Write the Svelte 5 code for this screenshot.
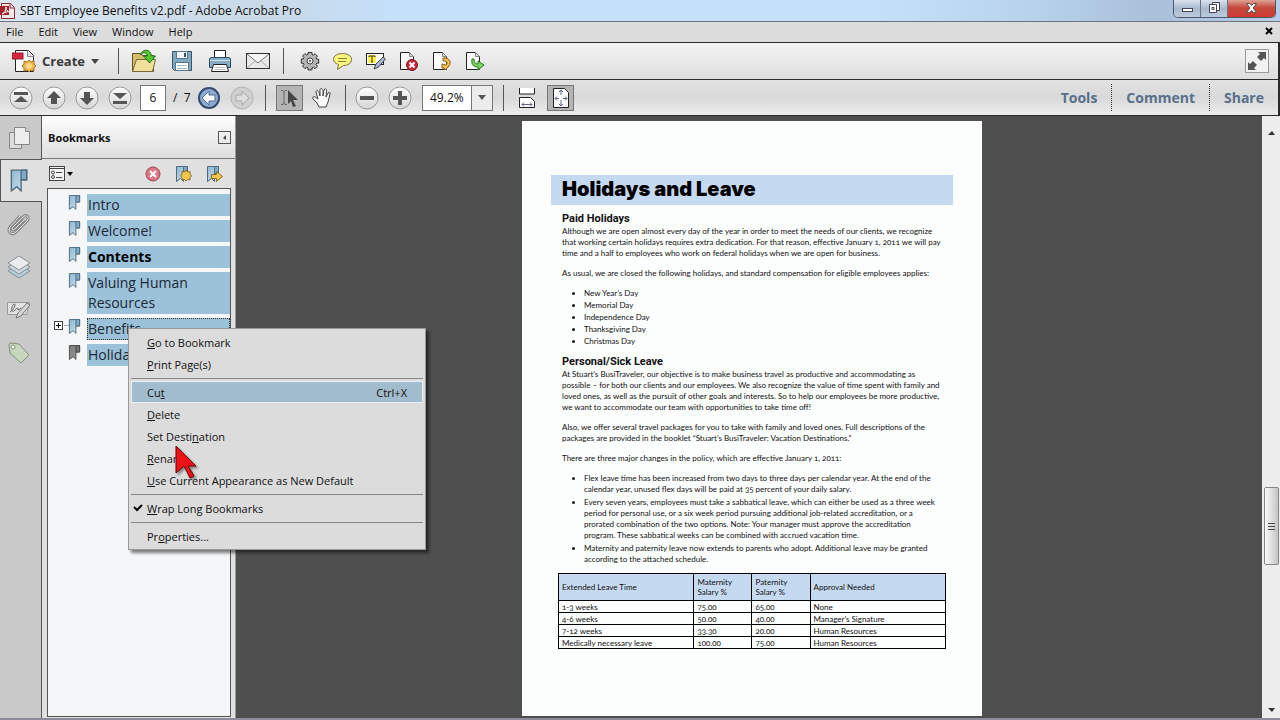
<script lang="ts">
  const menus = ['File', 'Edit', 'View', 'Window', 'Help'];

  const bookmarks = [
    { title: 'Intro' },
    { title: 'Welcome!' },
    { title: 'Contents', bold: true },
    { title: 'Valuing Human Resources' },
    { title: 'Benefits', expandable: true, focused: true },
    { title: 'Holidays', visited: true },
  ];

  // `key` is the index of the underlined access key
  const menuGroups = [
    [
      { label: 'Go to Bookmark', key: 0 },
      { label: 'Print Page(s)', key: 0 },
    ],
    [
      { label: 'Cut', key: 2, shortcut: 'Ctrl+X', active: true },
      { label: 'Delete', key: 0 },
      { label: 'Set Destination', key: 9 },
      { label: 'Rename', key: 0 },
      { label: 'Use Current Appearance as New Default', key: 0 },
    ],
    [{ label: 'Wrap Long Bookmarks', key: 0, checked: true }],
    [{ label: 'Properties...', key: 2 }],
  ];

  const holidays = [
    'New Year’s Day',
    'Memorial Day',
    'Independence Day',
    'Thanksgiving Day',
    'Christmas Day',
  ];

  const leaveRows = [
    ['1-3 weeks', '75.00', '65.00', 'None'],
    ['4-6 weeks', '50.00', '40.00', 'Manager’s Signature'],
    ['7-12 weeks', '33.30', '20.00', 'Human Resources'],
    ['Medically necessary leave', '100.00', '75.00', 'Human Resources'],
  ];

  let pageNumber = $state('6');
  let zoomLevel = $state('49.2%');
</script>

{#snippet ribbon()}
  <path d="M1.5 1.5h11v7h-4v8l-3-3-4 3z" fill="url(#ribbonFill)" stroke="#4d6b80" />
  <path d="M8.5 8.5v-6q0-1 1-1h3v7z" fill="#7fa9c4" stroke="#4d6b80" />
{/snippet}

{#snippet pageSheet()}
  <path d="M2.5 1.5h9l4 4v13h-13z" fill="#fafafa" stroke="#222" />
  <path d="M11.5 1.5v4h4" fill="#ddd" stroke="#888" />
{/snippet}

<svg class="defs" aria-hidden="true">
  <defs>
    <linearGradient id="ribbonFill" x1="0" x2="1" y2="1">
      <stop offset="0" stop-color="#8db6d0" />
      <stop offset="1" stop-color="#d3e6f1" />
    </linearGradient>
    <linearGradient id="roundFill" x2="0" y2="1">
      <stop offset="0" stop-color="#fff" />
      <stop offset="1" stop-color="#d4d4d4" />
    </linearGradient>
  </defs>
</svg>

<div class="app">
  <header class="titlebar">
    <svg class="app-icon" width="16" height="18" viewBox="0 0 16 18">
      <path d="M1.5 1.5h9l4 4v11h-13z" fill="#f4e4e4" stroke="#8c2f35" />
      <path d="M0 4h9v9H0z" fill="#a3222b" />
      <path d="M2 12c3-1 4-4 4-7 0 4 2 5 6 5-4-1-7 0-10 2" fill="none" stroke="#fff" />
      <path d="M10 2v4h4" fill="none" stroke="#8c2f35" />
    </svg>
    <span class="title">SBT Employee Benefits v2.pdf - Adobe Acrobat Pro</span>
    <div class="window-buttons">
      <button aria-label="Minimize">
        <svg width="13" height="16"><rect x="1.5" y="8.5" width="10" height="3" fill="#fff" stroke="#445" /></svg>
      </button>
      <button aria-label="Restore">
        <svg width="13" height="16" fill="#fff" stroke="#445">
          <path d="M4.500 2.500h7v8h-7z" /><path d="M1.500 4.500h7v8h-7z" /><path d="M4 7.500h2v2h-2z" />
        </svg>
      </button>
      <button class="close" aria-label="Close">
        <svg width="13" height="16"><path d="M1.500 3.500h3l2 2 2-2h3l-3.500 4.500 3.500 4.500h-3l-2-2-2 2h-3l3.500-4.500z" fill="#fff" stroke="#555" /></svg>
      </button>
    </div>
  </header>

  <nav class="menubar">
    {#each menus as menu}
      <button>{menu}</button>
    {/each}
    <button class="close-doc" aria-label="Close document">
      <svg width="8" height="8"><path d="M1 1l6 6M7 1l-6 6" stroke="#000" stroke-width="2" /></svg>
    </button>
  </nav>

  <div class="toolbar">
    <button class="create">
      <svg width="24" height="24" viewBox="0 0 24 24">
        <path d="M3.500 1.500h13l5 5v16h-18z" fill="#fafafa" stroke="#222" />
        <path d="M15.500 1.500v6h6" fill="#e4e4e4" stroke="#888" />
        <rect x="0" y="4" width="11" height="6" fill="#d8243c" stroke="#8d1f2b" />
        <path d="M17 11l2 2 3-1v3l2 2-2 2v3l-3-1-2 2-2-2-3 1v-3l-2-2 2-2v-3l3 1z" fill="#efb74f" stroke="#a87722" />
        <circle cx="17" cy="17" r="3" fill="#ffd98a" />
      </svg>
      <span>Create</span>
      <svg width="8" height="5"><path d="M0 0h8l-4 5z" fill="#444" /></svg>
    </button>
    <span class="sep"></span>
    <div class="wide-tools">
      <button aria-label="Open">
        <svg width="26" height="26" viewBox="0 0 26 26">
          <path d="M1.500 5.500h8l2 2h11v16h-21z" fill="#d3bd68" stroke="#5e5428" />
          <path d="M1.500 23.500l4-12h19l-3 12z" fill="#f0e09a" stroke="#75683a" />
          <path d="M9.500 7c1-6 10-7 11 1h4l-6 7-6-7h4c-1-4-5-4-7-1z" fill="#55c630" stroke="#22701b" />
        </svg>
      </button>
      <button aria-label="Save">
        <svg width="22" height="22" viewBox="0 0 22 22">
          <path d="M1.500 1.500h19v19h-17l-2-2z" fill="#7fa9c3" stroke="#38536a" />
          <path d="M5.500 1.500h11v7h-11z" fill="#f1f5f8" stroke="#54758d" />
          <path d="M13 3h2v4h-2z" fill="#38536a" />
          <path d="M4.500 12.500h13v8h-13z" fill="#fff" stroke="#54758d" />
          <path d="M6 15.500h10M6 18.500h10" stroke="#a9b6c0" />
        </svg>
      </button>
      <button aria-label="Print">
        <svg width="24" height="24" viewBox="0 0 24 24">
          <path d="M6.500 1.500h11v9h-11z" fill="#fff" stroke="#222" />
          <path d="M1.500 10.500q0-2 2-2h17q2 0 2 2v8h-21z" fill="#86acc6" stroke="#2f4d63" />
          <path d="M2 11.500h20" stroke="#cfe1ec" />
          <path d="M5.500 15.500h13l2 7h-17z" fill="#fff" stroke="#222" />
          <path d="M7 18.500h10M7 20.500h10" stroke="#bbb" />
        </svg>
      </button>
      <button aria-label="Email">
        <svg width="26" height="18" viewBox="0 0 26 18">
          <rect x="1.500" y="1.500" width="23" height="15" fill="#e9e9e9" stroke="#333" />
          <path d="M2 16l8-7M24 16l-8-7" stroke="#aaa" />
          <path d="M2 2l11 9 11-9" fill="#f6f6f6" stroke="#777" />
        </svg>
      </button>
    </div>
    <span class="sep"></span>
    <div class="tools first">
      <button aria-label="Preferences">
        <svg width="20" height="20" viewBox="0 0 20 20">
          <path d="M8 1.500h4v2l1.500.6 1.500-1.400 2.500 2.500-1.400 1.500.6 1.500h2v4h-2l-.6 1.500 1.400 1.500-2.500 2.500-1.500-1.400-1.500.6v2H8v-2l-1.500-.6-1.500 1.400-2.500-2.500 1.400-1.500-.6-1.500h-2V8h2l.6-1.500-1.400-1.500L5 2.500l1.500 1.400L8 3.300z" fill="#b5b5b5" stroke="#333" />
          <circle cx="10" cy="10" r="3" fill="#eee" stroke="#444" />
          <circle cx="10" cy="10" r="1" fill="#555" />
        </svg>
      </button>
      <button aria-label="Add sticky note">
        <svg width="21" height="18" viewBox="0 0 21 18">
          <path d="M10.500 1.500c5 0 9 2 9 6s-4 6-8 6l-6 4 1-5c-3-1-5-3-5-5 0-4 4-6 9-6z" fill="#fbf580" stroke="#777440" />
          <path d="M6 6.500h9M6 9.500h8" stroke="#888332" />
        </svg>
      </button>
      <button aria-label="Highlight text">
        <svg width="20" height="18" viewBox="0 0 20 18">
          <rect x=".5" y="1.500" width="17" height="11" fill="#fff" stroke="#222" />
          <path d="M2 3h8v8H2z" fill="#fff04a" />
          <path d="M3 5V4h6v1M6 4v6M5 10h2" fill="none" stroke="#333" />
          <path d="M8 17l2-5 7-7 2.500 2-7 8z" fill="#aab6d4" stroke="#444" />
        </svg>
      </button>
      <button aria-label="Delete pages">
        <svg width="21" height="21" viewBox="0 0 21 21">
          {@render pageSheet()}
          <circle cx="14" cy="14" r="5.500" fill="#c4283a" stroke="#7e1622" />
          <path d="M11.500 11.500l5 5M16.500 11.500l-5 5" stroke="#fff" stroke-width="2" />
        </svg>
      </button>
      <button aria-label="Rotate pages">
        <svg width="21" height="21" viewBox="0 0 21 21">
          {@render pageSheet()}
          <path d="M12 7c6-1 9 4 6 8l-4 4-1-2h-2v-4l4 1c2-2 1-4-3-4z" fill="#f0bb58" stroke="#8c631b" />
        </svg>
      </button>
      <button aria-label="Extract pages">
        <svg width="21" height="21" viewBox="0 0 21 21">
          {@render pageSheet()}
          <path d="M8 8c-1 6 2 8 6 8v3l6-5-6-4v3c-3 0-4-2-4-5z" fill="#7bd45f" stroke="#2a7a1e" />
        </svg>
      </button>
    </div>
    <button class="fullscreen" aria-label="Read mode">
      <svg width="20" height="20" viewBox="0 0 20 20" fill="#555">
        <path d="M19 1v8l-2-2-3 3-4-4 3-3-2-2z" /><path d="M1 19v-8l2 2 3-3 4 4-3 3 2 2z" />
      </svg>
    </button>
  </div>

  <div class="toolbar second">
    <div class="tools">
      <button aria-label="First page">
        <svg width="24" height="24" viewBox="0 0 24 24">
          <circle cx="12" cy="12" r="11" fill="url(#roundFill)" stroke="#999" />
          <path d="M5 6h14v3H5zM12 10l7 6H5z" fill="#555" />
        </svg>
      </button>
      <button aria-label="Previous page">
        <svg width="24" height="24" viewBox="0 0 24 24">
          <circle cx="12" cy="12" r="11" fill="url(#roundFill)" stroke="#999" />
          <path d="M12 5l7 7h-4v6H9v-6H5z" fill="#555" />
        </svg>
      </button>
      <button aria-label="Next page">
        <svg width="24" height="24" viewBox="0 0 24 24">
          <circle cx="12" cy="12" r="11" fill="url(#roundFill)" stroke="#999" />
          <path d="M12 19l7-7h-4V6H9v6H5z" fill="#555" />
        </svg>
      </button>
      <button aria-label="Last page">
        <svg width="24" height="24" viewBox="0 0 24 24">
          <circle cx="12" cy="12" r="11" fill="url(#roundFill)" stroke="#999" />
          <path d="M5 15h14v3H5zM12 13l7-6H5z" fill="#555" />
        </svg>
      </button>
    </div>
    <input class="page-input" aria-label="Page number" bind:value={pageNumber} />
    <span class="page-total">/&nbsp; 7</span>
    <div class="tools views">
      <button aria-label="Previous view">
        <svg width="24" height="24" viewBox="0 0 24 24">
          <circle cx="12" cy="12" r="10" fill="#8facd3" stroke="#344a70" stroke-width="2" />
          <path d="M5 12l7-7v4h6v6h-6v4z" fill="#fff" stroke="#4d6893" />
        </svg>
      </button>
      <button aria-label="Next view" disabled>
        <svg width="24" height="24" viewBox="0 0 24 24">
          <circle cx="12" cy="12" r="11" fill="#d0d0d0" stroke="#b4b4b4" />
          <path d="M19 12l-7-7v4H6v6h6v4z" fill="#dedede" stroke="#aaa" />
        </svg>
      </button>
    </div>
    <span class="sep"></span>
    <button class="pressed" aria-label="Selection tool">
      <svg width="20" height="20" viewBox="0 0 20 20">
        <path d="M1 2.500h2l1 1 1-1h2M1 16.500h2l1-1 1 1h2M4 3v13" fill="none" stroke="#666" />
        <path d="M8 2l10 10h-5l3 6-3 1-2-6-3 3z" fill="#444" />
      </svg>
    </button>
    <button class="hand" aria-label="Hand tool">
      <svg width="22" height="22" viewBox="0 0 22 22">
        <path d="M8 20l-2-4-4-4c-1-2 1-3 2-2l3 2-2-7c0-2 2-2 3 0l1 4V3c0-2 2-2 3 0v6l1-6c1-2 3-1 2.500 1l-.5 6 2-4c1-1 3-1 2 1l-2 8-2 5z" fill="#fafafa" stroke="#444" />
      </svg>
    </button>
    <span class="sep"></span>
    <div class="tools">
      <button aria-label="Zoom out">
        <svg width="24" height="24" viewBox="0 0 24 24">
          <circle cx="12" cy="12" r="11" fill="url(#roundFill)" stroke="#999" />
          <path d="M5 10h14v4H5z" fill="#555" />
        </svg>
      </button>
      <button aria-label="Zoom in">
        <svg width="24" height="24" viewBox="0 0 24 24">
          <circle cx="12" cy="12" r="11" fill="url(#roundFill)" stroke="#999" />
          <path d="M10 5h4v5h5v4h-5v5h-4v-5H5v-4h5z" fill="#555" />
        </svg>
      </button>
    </div>
    <div class="zoom">
      <select aria-label="Zoom level" bind:value={zoomLevel}>
        <option>49.2%</option>
        <option>100%</option>
      </select>
      <span class="zoom-arrow"><svg width="8" height="5"><path d="M0 0h8l-4 5z" fill="#555" /></svg></span>
    </div>
    <span class="sep"></span>
    <button class="fit" aria-label="Fit width">
      <svg width="18" height="22" viewBox="0 0 18 22" fill="#fff" stroke="#222">
        <path d="M1.500 1v6h15v-6" /><path d="M1.500 20.500v-10h11l4 4v6z" />
        <path d="M4 17.500h10M6 15.500l-2 2 2 2M12 15.500l2 2-2 2" fill="none" stroke="#667" />
      </svg>
    </button>
    <button class="pressed" aria-label="Fit page">
      <svg width="20" height="22" viewBox="0 0 20 22">
        <path d="M2.500 1.500h11l4 4v15h-15z" fill="#fff" stroke="#222" />
        <path d="M10 3v5M10 13v6M4 11.500h4M12 11.500h4M8 5l2-2 2 2M8 17l2 2 2-2M6 9.500l-2 2 2 2M14 9.500l2 2-2 2" fill="none" stroke="#5c6684" />
      </svg>
    </button>
    <div class="task-panes">
      <button>Tools</button>
      <button>Comment</button>
      <button>Share</button>
    </div>
  </div>

  <main class="workspace">
    <nav class="rail">
      <button aria-label="Page thumbnails">
        <svg width="22" height="24" viewBox="0 0 22 24" fill="#dcdcdc" stroke="#888">
          <path d="M1.500 6.500h12v16h-12z" /><path d="M6.500 1.500h11l4 4v13h-15z" fill="#eee" /><path d="M17.500 1.500v4h4" />
        </svg>
      </button>
      <button class="selected" aria-label="Bookmarks">
        <svg width="20" height="25" viewBox="0 0 14 18">{@render ribbon()}</svg>
      </button>
      <button aria-label="Attachments">
        <svg width="24" height="24" viewBox="0 0 24 24" fill="none" stroke="#888">
          <path d="M17 8l-9 9c-2 2-4 0-2-2L16 5c3-3 7 0 4 4L9 20c-4 4-9 0-6-5l10-11" stroke-width="3" />
          <path d="M17 8l-9 9c-2 2-4 0-2-2L16 5c3-3 7 0 4 4L9 20c-4 4-9 0-6-5l10-11" stroke="#e4e4e4" />
        </svg>
      </button>
      <button aria-label="Layers">
        <svg width="24" height="24" viewBox="0 0 24 24" stroke="#8a9095">
          <path d="M1 16l11-7 11 7-11 7z" fill="#b4cbd8" /><path d="M1 12l11-7 11 7-11 7z" fill="#ccd8df" /><path d="M1 8l11-7 11 7-11 7z" fill="#e9ebec" />
        </svg>
      </button>
      <button aria-label="Signatures">
        <svg width="24" height="20" viewBox="0 0 24 20">
          <path d="M.5 2.500h22l-3 12H.5z" fill="#e2e2e2" stroke="#999" />
          <path d="M3 12c5-3 6-9 4-8-3 2-3 9 0 7 3-3 4-4 4-1l3-2" fill="none" stroke="#666" />
          <path d="M9 18l2-5 9-10 3 2-9 11z" fill="#d5d5d5" stroke="#777" />
        </svg>
      </button>
      <button aria-label="Tags">
        <svg width="24" height="24" viewBox="0 0 24 24">
          <path d="M2 4q0-2 2-2l8 1 10 11-8 8L3 12z" fill="#c6d7bd" stroke="#85907f" />
          <circle cx="6" cy="6" r="2" fill="#f3f3f3" stroke="#85907f" />
        </svg>
      </button>
    </nav>

    <aside class="panel">
      <div class="panel-head">
        <h2>Bookmarks</h2>
        <button aria-label="Collapse panel">
          <svg width="3" height="5"><path d="M3 0v5l-3-2z" fill="#444" /></svg>
        </button>
      </div>
      <div class="panel-tools">
        <button class="options" aria-label="Options">
          <svg width="25" height="15" viewBox="0 0 25 15">
            <rect x=".5" y=".5" width="15" height="14" fill="#f3f3f3" stroke="#444" />
            <path d="M1 2.500h14M7 6.500h6M7 11.500h6" stroke="#444" />
            <circle cx="4" cy="6.500" r="1.500" fill="none" stroke="#444" /><circle cx="4" cy="11" r="1.500" fill="none" stroke="#444" />
            <path d="M18 6h6l-3 4z" fill="#000" />
          </svg>
        </button>
        <button aria-label="Delete bookmark">
          <svg width="16" height="16" viewBox="0 0 16 16">
            <circle cx="8" cy="8" r="7" fill="#dd7584" stroke="#9b4554" />
            <path d="M5 5l6 6M11 5l-6 6" stroke="#fff" stroke-width="2" />
          </svg>
        </button>
        <button aria-label="New bookmark">
          <svg width="17" height="18" viewBox="0 0 17 18">
            {@render ribbon()}
            <path d="M11 5l1.500 2 2.500-.5v2.500l1.500 2-1.500 1.500v2.500l-2.500-.5-1.500 1.500-1.500-1.500-2.500.5v-2.500L5.500 11 7 9V6.500l2.500.5z" fill="#f3c750" stroke="#8f6d1f" />
          </svg>
        </button>
        <button aria-label="Expand current bookmark">
          <svg width="17" height="18" viewBox="0 0 17 18">
            {@render ribbon()}
            <path d="M5.500 9.500h5v-3l6 5-6 5v-3h-5z" fill="#f3c750" stroke="#8f6d1f" />
          </svg>
        </button>
      </div>
      <ul class="tree">
        {#each bookmarks as item}
          <li>
            <span class="toggle">
              {#if item.expandable}
                <svg width="18" height="9" viewBox="0 0 18 9" fill="none">
                  <rect x=".5" y=".5" width="8" height="8" fill="#fff" stroke="#444" />
                  <path d="M2 4.500h5M4.500 2v5" stroke="#000" /><path d="M10 4.500h8" stroke="#aaa" />
                </svg>
              {/if}
            </span>
            <svg class="mark" class:visited={item.visited} width="13" height="17" viewBox="0 0 14 18">{@render ribbon()}</svg>
            <button class:bold={item.bold} class:focused={item.focused}>{item.title}</button>
          </li>
        {/each}
      </ul>
    </aside>

    <section class="viewer">
      <article class="page">
        <h1>Holidays and Leave</h1>
        <div class="body">
          <h3>Paid Holidays</h3>
          <p>
            Although we are open almost every day of the year in order to meet the needs of our clients, we recognize<br />
            that working certain holidays requires extra dedication. For that reason, effective January 1, 2011 we will pay<br />
            time and a half to employees who work on federal holidays when we are open for business.
          </p>
          <p>As usual, we are closed the following holidays, and standard compensation for eligible employees applies:</p>
          <ul class="short">
            {#each holidays as day}
              <li>{day}</li>
            {/each}
          </ul>
          <h3>Personal/Sick Leave</h3>
          <p>
            At Stuart’s BusiTraveler, our objective is to make business travel as productive and accommodating as<br />
            possible – for both our clients and our employees. We also recognize the value of time spent with family and<br />
            loved ones, as well as the pursuit of other goals and interests. So to help our employees be more productive,<br />
            we want to accommodate our team with opportunities to take time off!
          </p>
          <p>
            Also, we offer several travel packages for you to take with family and loved ones. Full descriptions of the<br />
            packages are provided in the booklet “Stuart’s BusiTraveler: Vacation Destinations.”
          </p>
          <p>There are three major changes in the policy, which are effective January 1, 2011:</p>
          <ul>
            <li>
              Flex leave time has been increased from two days to three days per calendar year. At the end of the<br />
              calendar year, unused flex days will be paid at 35 percent of your daily salary.
            </li>
            <li>
              Every seven years, employees must take a sabbatical leave, which can either be used as a three week<br />
              period for personal use, or a six week period pursuing additional job-related accreditation, or a<br />
              prorated combination of the two options. Note: Your manager must approve the accreditation<br />
              program. These sabbatical weeks can be combined with accrued vacation time.
            </li>
            <li>
              Maternity and paternity leave now extends to parents who adopt. Additional leave may be granted<br />
              according to the attached schedule.
            </li>
          </ul>
        </div>
        <table>
          <colgroup><col class="c1" /><col class="c2" /><col class="c2" /><col /></colgroup>
          <thead>
            <tr>
              <th>Extended Leave Time</th>
              <th>Maternity<br />Salary %</th>
              <th>Paternity<br />Salary %</th>
              <th>Approval Needed</th>
            </tr>
          </thead>
          <tbody>
            {#each leaveRows as row}
              <tr>
                {#each row as cell}<td>{cell}</td>{/each}
              </tr>
            {/each}
          </tbody>
        </table>
      </article>
    </section>

    <div class="scrollbar">
      <svg width="7" height="5"><path d="M0 5h7l-3-4z" fill="#333" /></svg>
      <div class="thumb">
        <svg width="7" height="8"><path d="M0 1.500h7M0 4.500h7M0 7.500h7" stroke="#444" /></svg>
      </div>
      <svg width="7" height="5"><path d="M0 0h7l-3 4z" fill="#333" /></svg>
    </div>
  </main>

  <div class="context-menu" role="menu">
    {#each menuGroups as group, i}
      {#if i > 0}<hr />{/if}
      {#each group as item}
        <button role="menuitem" class:active={item.active}>
          <span class="check">
            {#if item.checked}
              <svg width="10" height="8"><path d="M1 3l3 3 5-5" fill="none" stroke="#000" stroke-width="2" /></svg>
            {/if}
          </span>
          <span>{item.label.slice(0, item.key)}<u>{item.label[item.key]}</u>{item.label.slice(item.key + 1)}</span>
          {#if item.shortcut}<span class="shortcut">{item.shortcut}</span>{/if}
        </button>
      {/each}
    {/each}
  </div>

  <svg class="cursor" width="24" height="36" viewBox="0 0 24 36">
    <path d="M1 1l20 20h-8l6 10-4 2-6-12-8 7z" fill="#f01018" stroke="#600" />
  </svg>
</div>

<style>
  :global(body) { margin: 0; background: #4f4f4f; overflow: hidden; }

  .app {
    position: relative;
    display: flex;
    flex-direction: column;
    height: 100vh;
    font-family: "Open Sans", "Noto Sans", sans-serif;
    font-size: 12px;
    color: #111;
  }

  .defs { position: absolute; width: 0; height: 0; }

  button {
    font: inherit;
    color: inherit;
    background: none;
    border: 0;
    padding: 0;
    margin: 0;
    text-align: left;
  }

  svg { display: block; flex: none; }

  .titlebar {
    display: flex;
    height: 21px;
    align-items: center;
    border-bottom: 1px solid #6b7480;
    background: linear-gradient(90deg, #dbe6f1 0, #c9d9e8 270px, #c4e0fb 400px, #c4e1fb 68%, #b9d3ee 80%, #a9c0da 90%, #b5cde6 100%);
  }
  .title { margin-left: 4px; }
  .window-buttons {
    display: flex;
    align-self: flex-start;
    height: 17px;
    margin-left: auto;
    margin-right: 4px;
    border: 1px solid #4d5866;
    border-top: 0;
    border-radius: 0 0 5px 5px;
    overflow: hidden;
  }
  .window-buttons button {
    display: flex;
    justify-content: center;
    width: 27px;
    border-right: 1px solid #6a7686;
    background: linear-gradient(#d8e3ef, #a9bace 50%, #bccbdc);
  }
  .window-buttons .close {
    width: 47px;
    border-right: 0;
    background: linear-gradient(#e0a196, #c64a3b 45%, #cf3a30);
  }

  .menubar {
    display: flex;
    align-items: center;
    gap: 15px;
    height: 18px;
    padding: 0 7px 2px 6px;
    background: #dcdcdc;
    border-bottom: 1px solid #2b2b2b;
    font-size: 11px;
  }
  .menubar .close-doc { margin-left: auto; }

  .toolbar {
    display: flex;
    align-items: center;
    height: 36px;
    background: linear-gradient(#f4f4f4, #dedede);
    border-bottom: 1px solid #2b2b2b;
    border-right: 2px solid #2b2b2b;
  }
  .toolbar.second {
    height: 35px;
    background: linear-gradient(#e2e2e2, #d9d9d9 50%, #ececec);
  }

  .sep { width: 1px; height: 26px; background: #555; }

  .create {
    display: flex;
    align-items: center;
    gap: 6px;
    width: 118px;
    padding-left: 12px;
    font-size: 13px;
    font-weight: 700;
    color: #3b3b3b;
  }

  .wide-tools, .tools { display: flex; }
  .wide-tools { margin: 0 6px; }
  .tools { margin: 0 4px; }
  .tools.first { margin-left: 9px; }
  .tools.views { margin-right: 7px; }
  .wide-tools button, .tools button {
    display: flex;
    align-items: center;
    justify-content: center;
    height: 30px;
  }
  .wide-tools button { width: 38px; }
  .tools button { width: 33px; }

  .fullscreen {
    margin-left: auto;
    margin-right: 9px;
    padding: 1px;
    border: 1px solid #999;
    background: #f2f2f2;
  }

  .page-input {
    box-sizing: border-box;
    width: 26px;
    height: 26px;
    padding: 0;
    border: 1px solid #777;
    background: #fff;
    font: inherit;
    color: inherit;
    text-align: center;
  }
  .page-total { margin-left: 7px; width: 15px; white-space: nowrap; }

  .pressed {
    display: flex;
    align-items: center;
    justify-content: center;
    box-sizing: border-box;
    width: 27px;
    height: 26px;
    margin-left: 10px;
    border: 1px solid #777;
    background: #b4b4b4;
  }
  .hand { margin: 0 12px 0 8px; }
  .fit { margin-left: 14px; }
  .fit + .pressed { margin-left: 11px; }

  .zoom { display: grid; grid-template-columns: 48px 23px; margin: 0 10px 0 2px; }
  .zoom select {
    grid-area: 1 / 1 / 2 / 3;
    appearance: none;
    height: 26px;
    padding: 0 0 0 7px;
    border: 1px solid #777;
    border-radius: 0;
    background: #fff;
    font: inherit;
    color: inherit;
  }
  .zoom-arrow {
    grid-area: 1 / 2;
    display: flex;
    align-items: center;
    justify-content: center;
    margin: 1px;
    border-left: 1px solid #777;
    background: #ececec;
    pointer-events: none;
  }

  .task-panes {
    display: flex;
    margin-left: auto;
    font-size: 14px;
    font-weight: 700;
    color: #58708a;
  }
  .task-panes button { height: 27px; padding: 0 14px; }
  .task-panes button + button { border-left: 1px dotted #333; }

  .workspace { display: flex; flex: 1; min-height: 0; border-bottom: 2px solid #8d8d98; }

  .rail {
    display: flex;
    flex-direction: column;
    width: 41px;
    background: #c9c9c9;
    border-right: 1px solid #555;
  }
  .rail button {
    display: flex;
    align-items: center;
    justify-content: center;
    width: 37px;
    height: 43px;
  }
  .rail .selected {
    width: 42px;
    margin-right: -1px;
    background: #e0e0e0;
    border: 1px solid #555;
    border-right: 0;
    padding-right: 6px;
    box-sizing: border-box;
  }

  .panel {
    display: flex;
    flex-direction: column;
    width: 193px;
    background: #e0e0e0;
    border-right: 1px solid #999;
  }
  .panel-head {
    display: flex;
    align-items: center;
    justify-content: space-between;
    height: 42px;
    padding: 0 4px 0 6px;
    border-bottom: 1px solid #777;
    background: linear-gradient(#fdfdfd, #dedede);
  }
  .panel-head h2 { margin: 0; font-size: 11px; font-weight: 700; }
  .panel-head button { padding: 3px 4px; border: 1px solid #555; }
  .panel-tools {
    display: flex;
    align-items: center;
    gap: 14px;
    height: 29px;
    padding: 0 12px 0 7px;
  }
  .options { margin-right: auto; }

  .tree {
    flex: 1;
    margin: 0 4px 1px 5px;
    padding: 5px 0 0;
    list-style: none;
    border: 1px solid #555;
    background: #f5f6f7;
  }
  .tree li { display: flex; margin-bottom: 4px; }
  .toggle { width: 20px; padding: 3px 0 0 6px; box-sizing: border-box; }
  .mark { margin-right: 6px; }
  .visited { filter: grayscale(1) brightness(0.7); }
  .tree button {
    flex: 1;
    padding: 1px 1px;
    background: #9bc2d9;
    font-size: 14px;
    line-height: 20px;
    color: #1b2836;
  }
  .tree .bold { font-weight: 700; color: #000; }
  .tree .focused { outline: 1px dotted #333; outline-offset: -1px; }

  .viewer {
    flex: 1;
    display: flex;
    justify-content: center;
    padding: 5px 0 2px 6px;
    background: #4f4f4f;
  }
  .page {
    box-sizing: border-box;
    width: 460px;
    padding: 54px 29px 0;
    background: #fcfdfd;
    font-family: Lato, Carlito, sans-serif;
    font-size: 8px;
    line-height: 11px;
    font-variant-numeric: oldstyle-nums;
    white-space: nowrap;
  }
  .page h1 {
    margin: 0 0 7px;
    padding: 0 0 2px 11px;
    background: #c5d9f1;
    font-family: Inter, "Liberation Sans", sans-serif;
    font-size: 20px;
    font-weight: 900;
    line-height: 28px;
    color: #000;
  }
  .body { padding-left: 11px; }
  .page h3 {
    margin: 0 0 1px;
    font-family: Roboto, "Liberation Sans", sans-serif;
    font-size: 11px;
    font-weight: 700;
    line-height: 13px;
  }
  .page p { margin: 0 0 9px; }
  .page ul { margin: 0; padding-left: 22px; }
  .page ul li { margin-bottom: 2px; }
  .page .short { margin: -1px 0 8px; line-height: 12px; }
  .page .short li { margin: 0; }

  .page table {
    width: 388px;
    margin: 8px 0 0 7px;
    border-collapse: collapse;
    table-layout: fixed;
    line-height: 10px;
  }
  .c1 { width: 35%; }
  .c2 { width: 15%; }
  .page th, .page td { border: 1px solid #000; padding: 0 3px; text-align: left; font-weight: 400; }
  .page th { height: 26px; background: #c5d9f1; }
  .page td { height: 11px; }

  .scrollbar {
    display: flex;
    flex-direction: column;
    align-items: center;
    width: 18px;
    padding: 14px 0 5px;
    box-sizing: border-box;
    background: #ededed;
  }
  .thumb {
    display: flex;
    align-items: center;
    justify-content: center;
    width: 13px;
    height: 76px;
    margin: auto 0 143px;
    border: 1px solid #888;
    border-radius: 2px;
    background: linear-gradient(90deg, #fafafa, #c4c4c4);
  }

  .context-menu {
    position: absolute;
    left: 128px;
    top: 328px;
    box-sizing: border-box;
    width: 298px;
    padding: 2px;
    border: 1px solid #999;
    background: #dcdcdc;
    box-shadow: 3px 3px 3px rgba(0, 0, 0, 0.5);
    font-size: 11px;
  }
  .context-menu button {
    display: flex;
    align-items: center;
    width: 100%;
    height: 22px;
    padding-right: 15px;
    border: 1px solid transparent;
    box-sizing: border-box;
  }
  .context-menu .active { background: #a1bccd; border-color: #e8eef2; }
  .context-menu hr { height: 1px; margin: 3px 0 2px; border: 0; background: #888; }
  .check { width: 15px; padding-left: 1px; box-sizing: border-box; }
  .shortcut { margin-left: auto; }

  .cursor {
    position: absolute;
    left: 175px;
    top: 445px;
    filter: drop-shadow(2px 2px 1px rgba(0, 0, 0, 0.4));
  }
</style>
